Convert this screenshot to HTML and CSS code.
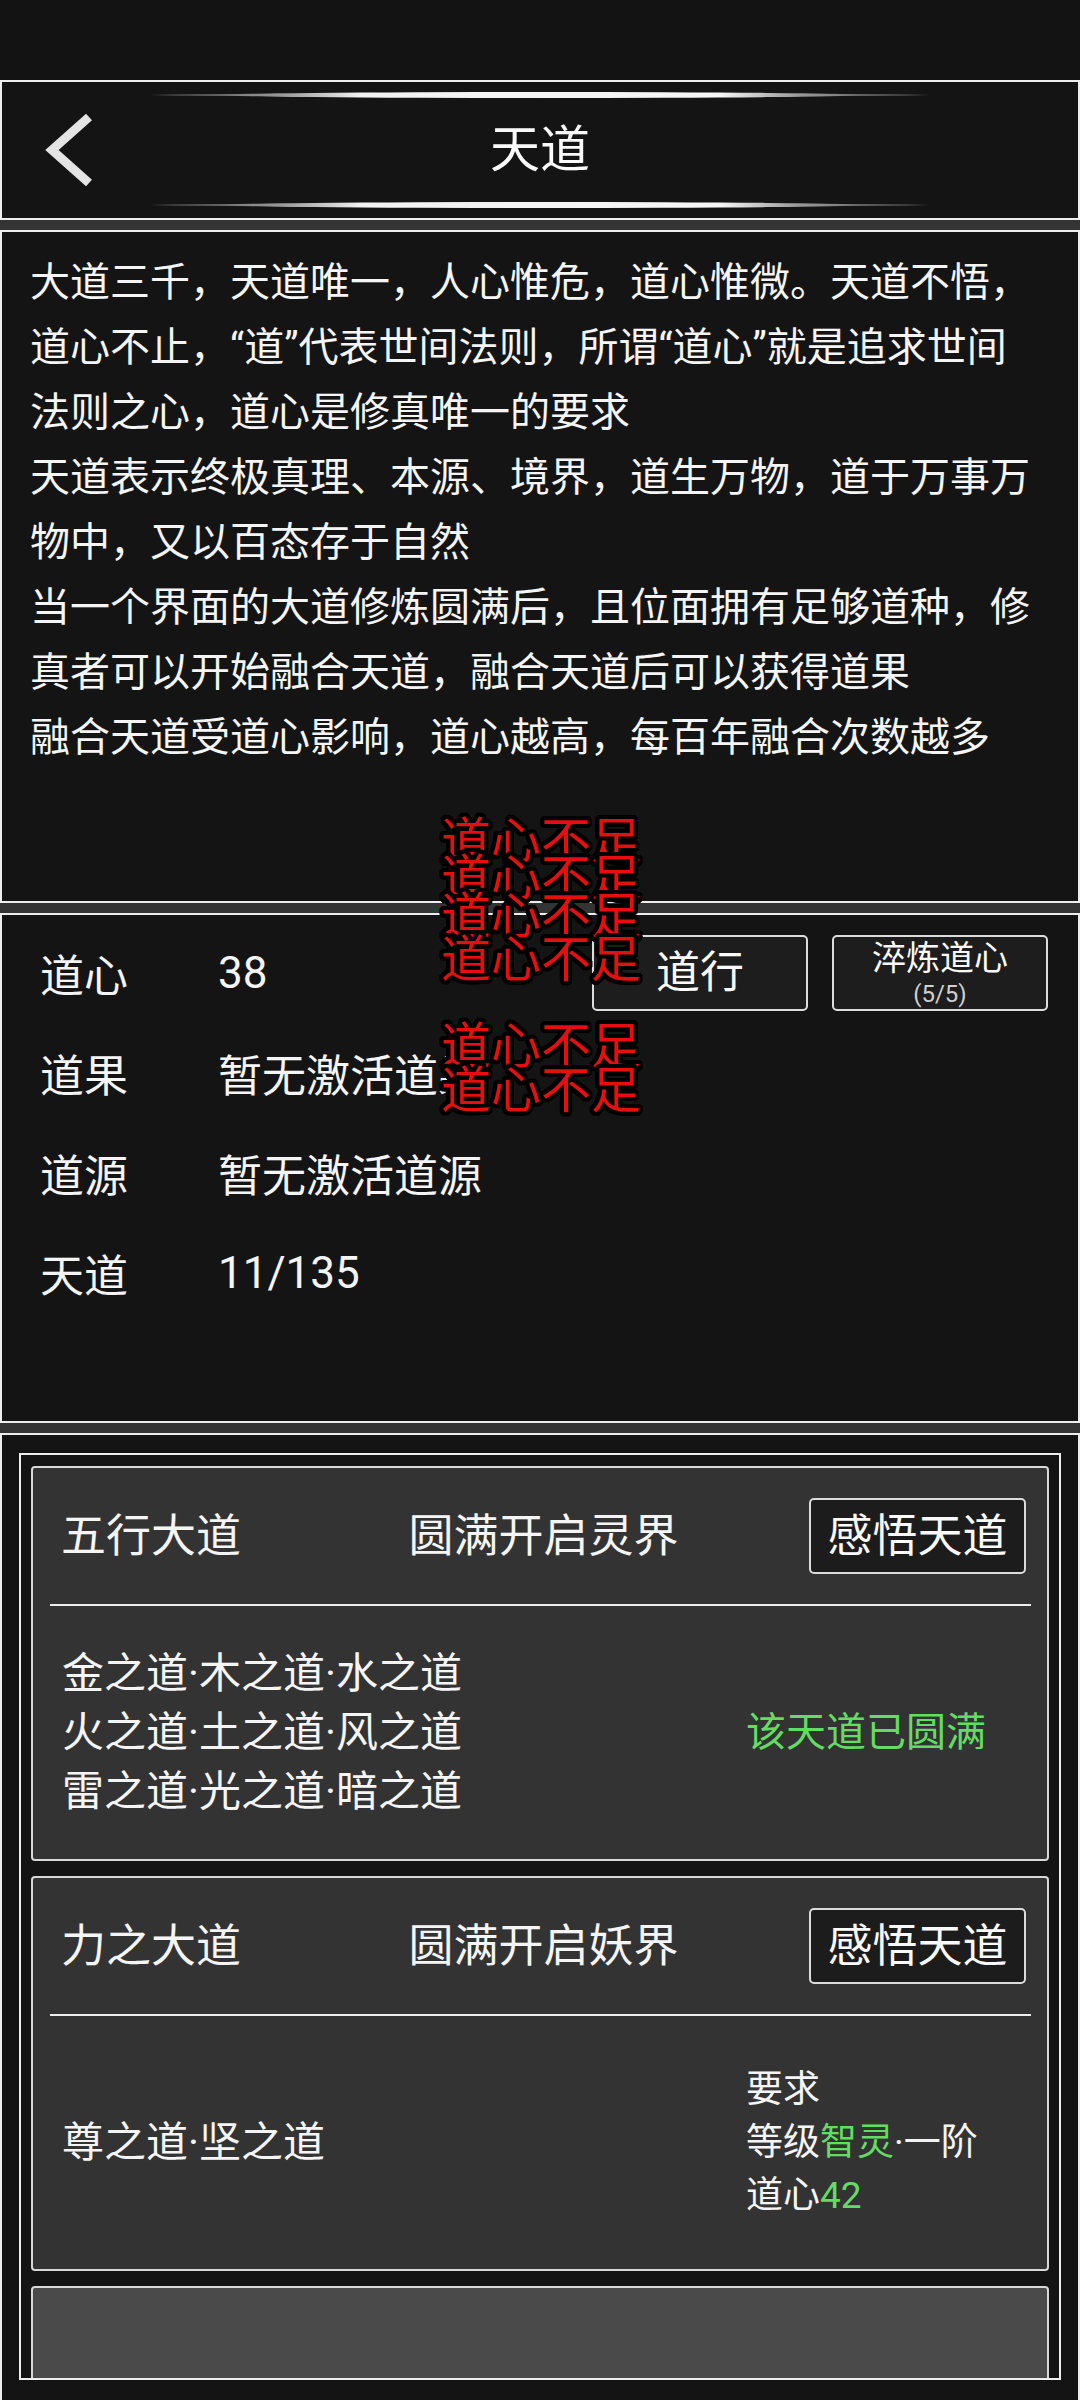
FILE: index.html
```html
<!DOCTYPE html>
<html lang="zh-CN">
<head>
<meta charset="utf-8">
<title>天道</title>
<link rel="stylesheet" href="styles.css">
</head>
<body>
<div class="app">
  <div class="statusbar"></div>
  <div class="main">
    <header class="panel topbar">
      <div class="glow"></div>
      <div class="title-row">
        <a class="back" href="#" aria-label="返回">
          <svg width="50" height="76" viewBox="0 0 50 76"><polyline points="45,5 8,38 45,71" fill="none" stroke="#e4e4e4" stroke-width="9" stroke-linejoin="miter" stroke-linecap="butt"/></svg>
        </a>
        <h1 class="title">天道</h1>
        <span class="spacer"></span>
      </div>
      <div class="glow"></div>
    </header>

    <section class="panel intro">
      <p>大道三千，天道唯一，人心惟危，道心惟微。天道不悟，道心不止，“道”代表世间法则，所谓“道心”就是追求世间法则之心，道心是修真唯一的要求</p>
      <p>天道表示终极真理、本源、境界，道生万物，道于万事万物中，又以百态存于自然</p>
      <p>当一个界面的大道修炼圆满后，且位面拥有足够道种，修真者可以开始融合天道，融合天道后可以获得道果</p>
      <p>融合天道受道心影响，道心越高，每百年融合次数越多</p>
    </section>

    <section class="panel stats">
      <div class="stat-row">
        <span class="label">道心</span>
        <span class="value">38</span>
        <div class="actions">
          <button class="btn btn-walk">道行</button>
          <button class="btn btn-refine"><span class="main-t">淬炼道心</span><span class="sub-t">(5/5)</span></button>
        </div>
      </div>
      <div class="stat-row">
        <span class="label">道果</span>
        <span class="value">暂无激活道果</span>
      </div>
      <div class="stat-row">
        <span class="label">道源</span>
        <span class="value">暂无激活道源</span>
      </div>
      <div class="stat-row">
        <span class="label">天道</span>
        <span class="value">11/135</span>
      </div>
    </section>

    <section class="panel list-panel">
      <div class="list-frame">
        <div class="card">
          <div class="card-head">
            <span class="card-name">五行大道</span>
            <span class="card-goal">圆满开启灵界</span>
            <button class="btn btn-comprehend">感悟天道</button>
          </div>
          <div class="divider"></div>
          <div class="card-body">
            <div class="ways">
              <div>金之道·木之道·水之道</div>
              <div>火之道·土之道·风之道</div>
              <div>雷之道·光之道·暗之道</div>
            </div>
            <div class="req"><span class="green done">该天道已圆满</span></div>
          </div>
        </div>

        <div class="card">
          <div class="card-head">
            <span class="card-name">力之大道</span>
            <span class="card-goal">圆满开启妖界</span>
            <button class="btn btn-comprehend">感悟天道</button>
          </div>
          <div class="divider"></div>
          <div class="card-body">
            <div class="ways">
              <div>尊之道·坚之道</div>
            </div>
            <div class="req small">
              <div>要求</div>
              <div>等级<span class="green">智灵</span>·一阶</div>
              <div>道心<span class="green">42</span></div>
            </div>
          </div>
        </div>

        <div class="card card-next"></div>
      </div>
    </section>
  </div>

  <div class="toast t1">道心不足</div>
  <div class="toast t2">道心不足</div>
  <div class="toast t3">道心不足</div>
  <div class="toast t4">道心不足</div>
  <div class="toast t5">道心不足</div>
  <div class="toast t6">道心不足</div>
</div>
</body>
</html>
```

FILE: styles.css
```css
html, body {
  margin: 0;
  padding: 0;
  background: #141414;
  overflow: hidden;
}

body {
  width: 1080px;
  height: 2400px;
  font-family: Roboto, "Noto Sans CJK SC", "Noto Sans", sans-serif;
  color: #f5f5f5;
}

.app {
  position: relative;
  width: 1080px;
  height: 2400px;
  overflow: hidden;
  display: flex;
  flex-direction: column;
  background: #141414;
}

.statusbar {
  height: 80px;
  flex: none;
  background: #131313;
}

.main {
  display: flex;
  flex-direction: column;
  gap: 10px;
  background: #343434;
  flex: none;
}

.panel {
  box-sizing: border-box;
  border: 2px solid #eeeeee;
  background: #141414;
  flex: none;
}

/* ---------- top bar ---------- */
.topbar {
  height: 140px;
  padding: 10px 0;
  display: flex;
  flex-direction: column;
}

.glow {
  position: relative;
  width: 780px;
  height: 6px;
  margin: 0 auto;
  flex: none;
}
.glow::before {
  content: "";
  position: absolute;
  left: 0;
  right: 0;
  top: 2px;
  height: 2px;
  background: linear-gradient(90deg, rgba(120,120,120,0) 0%, #3a3a3a 3%, #777 12%, #777 88%, #3a3a3a 97%, rgba(120,120,120,0) 100%);
}
.glow::after {
  content: "";
  position: absolute;
  left: 70px;
  right: 70px;
  top: 0;
  height: 6px;
  border-radius: 50%;
  background: linear-gradient(90deg, rgba(255,255,255,0) 0%, #9a9a9a 10%, #f2f2f2 22%, #f6f6f6 78%, #9a9a9a 90%, rgba(255,255,255,0) 100%);
}

.title-row {
  flex: 1;
  display: grid;
  grid-template-columns: 1fr auto 1fr;
  align-items: center;
}

.back {
  display: flex;
  align-items: center;
  padding-left: 42px;
  text-decoration: none;
}
.back svg { display: block; }

.title {
  margin: 0;
  font-size: 50px;
  font-weight: 400;
  line-height: 1;
  color: #fafafa;
}

/* ---------- intro ---------- */
.intro {
  height: 673px;
  padding: 18px 44px 0 28px;
  font-size: 40px;
  line-height: 65px;
}
.intro p {
  margin: 0;
}

/* ---------- stats ---------- */
.stats {
  height: 510px;
  padding: 8px 30px 0 38px;
}

.stat-row {
  height: 100px;
  display: grid;
  grid-template-columns: 178px 1fr auto;
  align-items: center;
  font-size: 44px;
}

.actions {
  display: flex;
  gap: 24px;
}

.btn {
  box-sizing: border-box;
  width: 216px;
  height: 76px;
  border: 2px solid #dcdcdc;
  border-radius: 5px;
  background: #1d1d1d;
  color: #fafafa;
  font-family: Roboto, "Noto Sans CJK SC", sans-serif;
  padding: 0;
  margin: 0;
  display: flex;
  flex-direction: column;
  align-items: center;
  justify-content: center;
}

.btn-walk {
  font-size: 44px;
  line-height: 1;
}

.btn-refine .main-t {
  font-size: 34px;
  line-height: 40px;
}
.btn-refine .sub-t {
  font-size: 24px;
  line-height: 28px;
  padding-top: 2px;
  color: #d0d0d0;
}

/* ---------- list ---------- */
.list-panel {
  height: 1000px;
  padding: 18px 17px;
}

.list-frame {
  box-sizing: border-box;
  height: 927px;
  border: 2px solid #eeeeee;
  padding: 11px 10px 0;
  overflow: hidden;
  display: flex;
  flex-direction: column;
  gap: 15px;
}

.card {
  flex: none;
  border: 2px solid #d8d8d8;
  border-radius: 4px;
  background: #333333;
}

.card-head {
  height: 136px;
  display: grid;
  grid-template-columns: 1fr auto 1fr;
  align-items: center;
  padding: 0 21px 0 28px;
  font-size: 45px;
  line-height: 1;
}

.card-goal {
  text-align: center;
}

.btn-comprehend {
  justify-self: end;
  width: 217px;
  font-size: 45px;
  line-height: 1;
  background: #1c1c1c;
}

.divider {
  height: 2px;
  margin: 0 16px 0 17px;
  background: #eeeeee;
}

.card-body {
  box-sizing: border-box;
  min-height: 253px;
  padding: 38px 29px;
  display: grid;
  grid-template-columns: 1fr 272px;
  align-items: center;
}

.ways {
  font-size: 42px;
  line-height: 59px;
}

.req {
  font-size: 40px;
  line-height: 59px;
}
.req.small {
  font-size: 37px;
  line-height: 53px;
}

.green {
  color: #64dc64;
}

.card-next {
  height: 160px;
  background: #4a4a4a;
}

/* ---------- toasts ---------- */
.toast {
  position: absolute;
  left: 441px;
  font-family: "Noto Sans CJK SC", sans-serif;
  font-size: 50px;
  line-height: 1;
  color: #e60f0f;
  white-space: nowrap;
  text-shadow:
    4px 0 0 #000, -4px 0 0 #000, 0 4px 0 #000, 0 -4px 0 #000,
    3px 3px 0 #000, -3px 3px 0 #000, 3px -3px 0 #000, -3px -3px 0 #000,
    4px 2px 0 #000, -4px 2px 0 #000, 4px -2px 0 #000, -4px -2px 0 #000,
    2px 4px 0 #000, -2px 4px 0 #000, 2px -4px 0 #000, -2px -4px 0 #000,
    2px 0 0 #000, -2px 0 0 #000, 0 2px 0 #000, 0 -2px 0 #000;
}
.t1 { top: 812px; }
.t2 { top: 849px; }
.t3 { top: 887px; }
.t4 { top: 930px; }
.t5 { top: 1017px; }
.t6 { top: 1061px; }
```
